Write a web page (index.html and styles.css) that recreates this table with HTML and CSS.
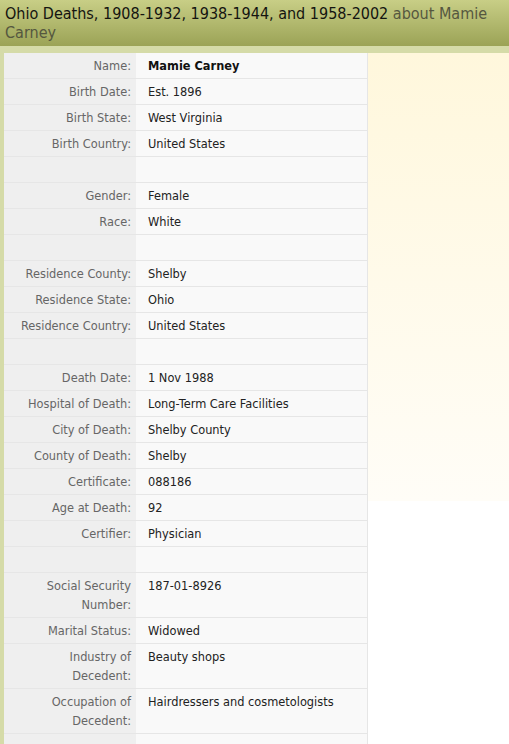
FILE: index.html
```html
<!DOCTYPE html>
<html>
<head>
<meta charset="utf-8">
<link rel="stylesheet" href="styles.css">
</head>
<body>
<div class="header">
  <h1 class="title">Ohio Deaths, 1908-1932, 1938-1944, and 1958-2002 <span class="about">about Mamie Carney</span></h1>
</div>
<div class="main">
  <table class="record">
    <tr><th>Name:</th><td><b>Mamie Carney</b></td></tr>
    <tr><th>Birth Date:</th><td>Est. 1896</td></tr>
    <tr><th>Birth State:</th><td>West Virginia</td></tr>
    <tr><th>Birth Country:</th><td>United States</td></tr>
    <tr><th>&nbsp;</th><td>&nbsp;</td></tr>
    <tr><th>Gender:</th><td>Female</td></tr>
    <tr><th>Race:</th><td>White</td></tr>
    <tr><th>&nbsp;</th><td>&nbsp;</td></tr>
    <tr><th>Residence County:</th><td>Shelby</td></tr>
    <tr><th>Residence State:</th><td>Ohio</td></tr>
    <tr><th>Residence Country:</th><td>United States</td></tr>
    <tr><th>&nbsp;</th><td>&nbsp;</td></tr>
    <tr><th>Death Date:</th><td>1 Nov 1988</td></tr>
    <tr><th>Hospital of Death:</th><td>Long-Term Care Facilities</td></tr>
    <tr><th>City of Death:</th><td>Shelby County</td></tr>
    <tr><th>County of Death:</th><td>Shelby</td></tr>
    <tr><th>Certificate:</th><td>088186</td></tr>
    <tr><th>Age at Death:</th><td>92</td></tr>
    <tr><th>Certifier:</th><td>Physician</td></tr>
    <tr><th>&nbsp;</th><td>&nbsp;</td></tr>
    <tr><th>Social Security Number:</th><td>187-01-8926</td></tr>
    <tr><th>Marital Status:</th><td>Widowed</td></tr>
    <tr><th>Industry of Decedent:</th><td>Beauty shops</td></tr>
    <tr><th>Occupation of Decedent:</th><td>Hairdressers and cosmetologists</td></tr>
    <tr><th>&nbsp;</th><td>&nbsp;</td></tr>
  </table>
</div>
</body>
</html>
```
FILE: styles.css
```css
html, body {
  margin: 0;
  padding: 0;
  background: #ffffff;
}
body {
  font-family: "DejaVu Sans", Verdana, sans-serif;
}
.header {
  background: linear-gradient(#c8ce86, #9ba356);
  border-bottom: 7px solid #d5dba8;
  padding: 4px 5px 4px 5px;
}
.title {
  margin: 0;
  font-family: "DejaVu Sans Condensed", "DejaVu Sans", sans-serif;
  font-stretch: semi-condensed;
  font-size: 16px;
  font-weight: normal;
  line-height: 19px;
  color: #141410;
}
.about {
  color: #55573f;
}
.main {
  display: flex;
  align-items: flex-start;
  border-left: 4px solid #d5dba8;
  min-height: 700px;
  background: linear-gradient(#fff7dc, #fffdf7 448px, #ffffff 448px) no-repeat;
}
.record {
  width: 364px;
  border-collapse: collapse;
  font-size: 11.4px;
  line-height: 19px;
  border-right: 1px solid #e6e6e6;
}
.record th,
.record td {
  padding: 4px 0 2px 0;
  border-bottom: 1px solid #e6e6e6;
  vertical-align: top;
}
.record th {
  width: 132px;
  box-sizing: border-box;
  padding-right: 5px;
  padding-left: 8px;
  text-align: right;
  font-weight: normal;
  color: #666666;
  background: #efefef;
}
.record td {
  padding-left: 12px;
  color: #222222;
  background: #f9f9f9;
}
.record b {
  font-weight: bold;
  color: #111111;
}
```
